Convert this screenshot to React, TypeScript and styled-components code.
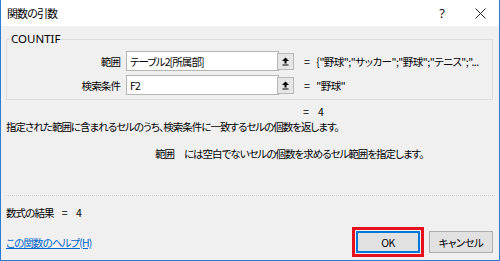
import React from 'react';
import styled, {createGlobalStyle} from 'styled-components';

const GlobalStyle = createGlobalStyle`
  html, body {
    margin: 0;
    padding: 0;
    background: #ffffff;
  }
  body {
    font-family: "Noto Sans CJK JP", "Noto Sans", sans-serif;
    font-size: 10.5px;
    letter-spacing: -0.9px;
    color: #000;
    font-feature-settings: "palt";
  }
`;

const Window = styled.div`
  width: 500px;
  height: 261px;
  box-sizing: border-box;
  border: 1px solid #2b7cd3;
  border-top: none;
  background: #f0f0f0;
  display: flex;
  flex-direction: column;
`;

const TitleBar = styled.div`
  height: 26px;
  flex: 0 0 auto;
  background: #ffffff;
  display: flex;
  align-items: center;
  padding: 0 0 0 6px;
`;

const Title = styled.div`
  flex: 1;
  font-size: 11px;
  line-height: 14px;
`;

const TitleButton = styled.div`
  width: 38px;
  display: flex;
  justify-content: center;
  align-items: center;
  font-family: "Noto Sans", sans-serif;
  font-size: 13px;
  letter-spacing: 0;
  color: #111;
`;

const Body = styled.div`
  flex: 1;
  display: flex;
  flex-direction: column;
  padding: 0 6px 0 5px;
`;

const GroupBox = styled.fieldset`
  margin: 6px 0 0 0;
  padding: 5px 0 4px 0;
  border: 1px solid #dcdcdc;
  display: flex;
  flex-direction: column;
  gap: 4px;
`;

const Legend = styled.legend`
  margin-left: 3px;
  padding: 0 1px;
  line-height: 14px;
  font-family: "Noto Sans", sans-serif;
  font-size: 11.5px;
  letter-spacing: 0;
`;

const ArgRow = styled.div`
  display: flex;
  align-items: center;
  height: 20px;
`;

const ArgLabel = styled.div`
  width: 113px;
  margin-right: 6px;
  text-align: right;
`;

const ArgInput = styled.div`
  width: 148px;
  height: 18px;
  border: 1px solid #b4b4b4;
  background: #ffffff;
  padding-left: 3px;
  box-sizing: content-box;
  display: flex;
  align-items: center;
`;

const RefButton = styled.div`
  width: 15px;
  height: 15px;
  margin-left: -2px;
  border: 1px solid #b8b8b8;
  background: #e6e6e6;
  display: flex;
  align-items: center;
  justify-content: center;
`;

const ArgValue = styled.div`
  margin-left: 10px;
  white-space: nowrap;
  display: flex;
  gap: 7px;
  letter-spacing: -0.5px;
`;

const ResultLine = styled.div<{$indent: number}>`
  margin-top: 5px;
  padding-left: ${p => p.$indent}px;
  display: flex;
  gap: 10px;
  line-height: 14px;
`;

const Description = styled.div`
  margin-top: 0;
  line-height: 16px;
  white-space: nowrap;
  letter-spacing: -1px;
`;

const ParamHelp = styled.div`
  margin-top: 11px;
  padding-left: 149px;
  display: flex;
  gap: 10px;
  line-height: 16px;
  white-space: nowrap;
  letter-spacing: -1px;
`;

const Separator = styled.div`
  margin-top: 33px;
  border-top: 1px dotted #d0d0d0;
  margin-right: -2px;
`;

const FormulaResult = styled.div`
  margin-top: 9px;
  line-height: 16px;
  display: flex;
  gap: 8px;
`;

const Footer = styled.div`
  margin-top: 10px;
  display: flex;
  align-items: center;
  justify-content: space-between;
`;

const HelpLink = styled.a`
  color: #0066cc;
  text-decoration: underline;
  cursor: pointer;
`;

const ButtonGroup = styled.div`
  display: flex;
  gap: 9px;
`;

const DialogButton = styled.button<{$primary?: boolean}>`
  width: 64px;
  height: 22px;
  padding: 0;
  font-family: "Noto Sans CJK JP", "Noto Sans", sans-serif;
  font-feature-settings: "palt";
  font-size: 10.5px;
  letter-spacing: -0.6px;
  color: #000;
  background: #e1e1e1;
  border: 1px solid ${p => (p.$primary ? '#0078d7' : '#adadad')};
  box-shadow: ${p => (p.$primary ? 'inset 0 0 0 1px #0078d7' : 'none')};
  outline: ${p => (p.$primary ? '3px solid #e8101a' : 'none')};
  outline-offset: 1px;
`;

const RefIcon = () => (
  <svg width="7" height="9" viewBox="0 0 7 9">
    <polygon points="0,4 3.5,0.5 7,4" fill="#000" />
    <rect x="2.5" y="3.5" width="2" height="3" fill="#000" />
    <rect x="0.5" y="7.5" width="6" height="1" fill="#000" />
  </svg>
);

const CloseIcon = () => (
  <svg width="11" height="11" viewBox="0 0 11 11">
    <path d="M0.5 0.5 L10.5 10.5 M10.5 0.5 L0.5 10.5" stroke="#222" strokeWidth="1" />
  </svg>
);

const App: React.FC = () => {
  return (
    <>
      <GlobalStyle />
      <Window>
        <TitleBar>
          <Title>関数の引数</Title>
          <TitleButton>?</TitleButton>
          <TitleButton>
            <CloseIcon />
          </TitleButton>
        </TitleBar>
        <Body>
          <GroupBox>
            <Legend>COUNTIF</Legend>
            <ArgRow>
              <ArgLabel>範囲</ArgLabel>
              <ArgInput>テーブル2[所属部]</ArgInput>
              <RefButton>
                <RefIcon />
              </RefButton>
              <ArgValue>
                <span>=</span>
                <span>{'{"野球";"サッカー";"野球";"テニス";"...'}</span>
              </ArgValue>
            </ArgRow>
            <ArgRow>
              <ArgLabel>検索条件</ArgLabel>
              <ArgInput>F2</ArgInput>
              <RefButton>
                <RefIcon />
              </RefButton>
              <ArgValue>
                <span>=</span>
                <span>"野球"</span>
              </ArgValue>
            </ArgRow>
          </GroupBox>
          <ResultLine $indent={297}>
            <span>=</span>
            <span>4</span>
          </ResultLine>
          <Description>
            指定された範囲に含まれるセルのうち、検索条件に一致するセルの個数を返します。
          </Description>
          <ParamHelp>
            <span>範囲</span>
            <span>には空白でないセルの個数を求めるセル範囲を指定します。</span>
          </ParamHelp>
          <Separator />
          <FormulaResult>
            <span>数式の結果</span>
            <span>=</span>
            <span>&nbsp;4</span>
          </FormulaResult>
          <Footer>
            <HelpLink>この関数のヘルプ(H)</HelpLink>
            <ButtonGroup>
              <DialogButton $primary>OK</DialogButton>
              <DialogButton>キャンセル</DialogButton>
            </ButtonGroup>
          </Footer>
        </Body>
      </Window>
    </>
  );
};

export default App;
